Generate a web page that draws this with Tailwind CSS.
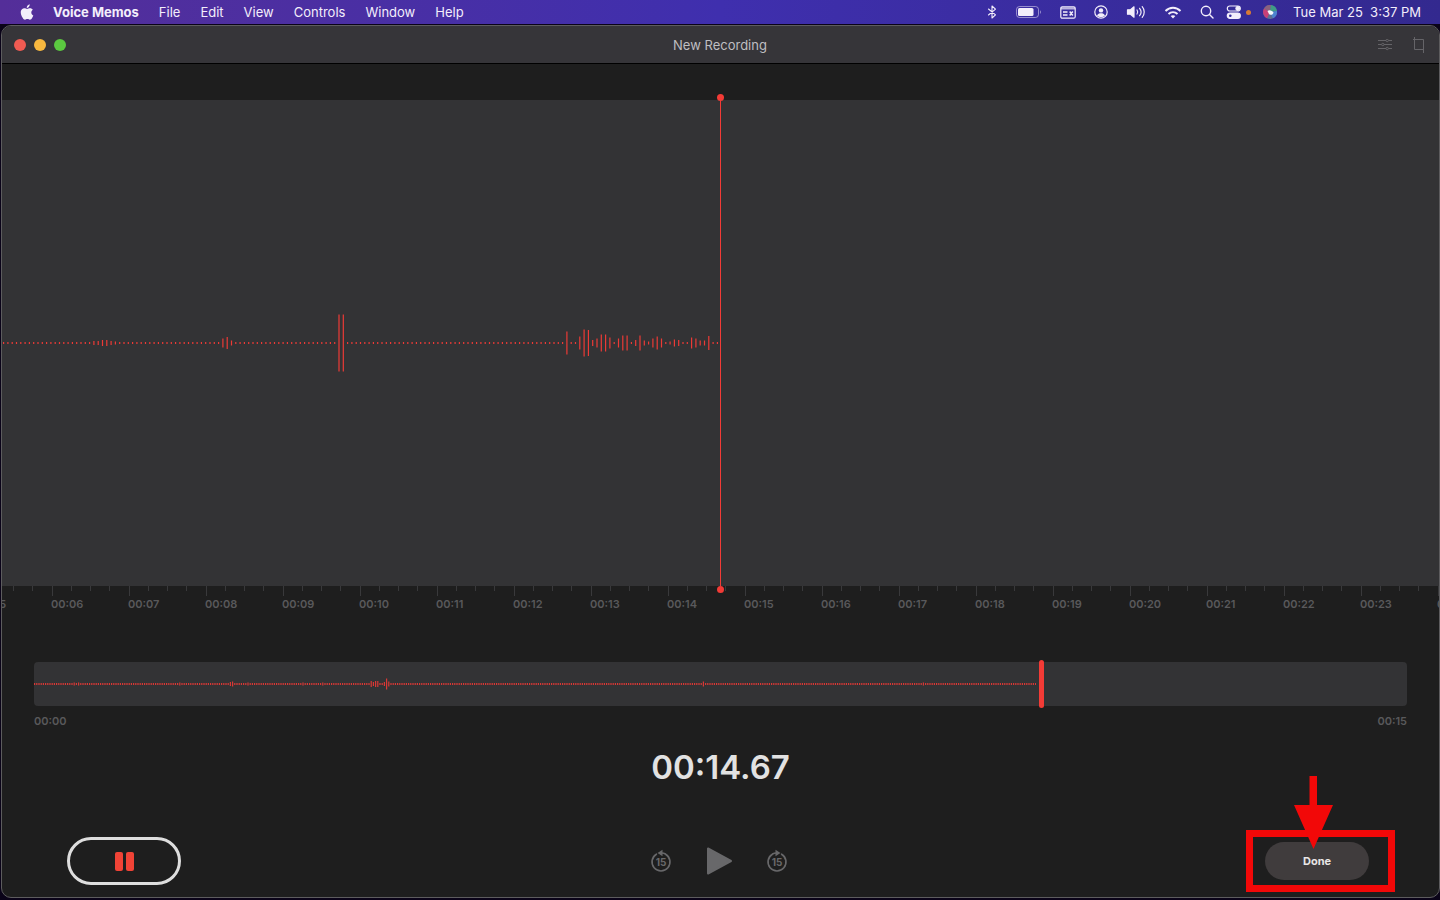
<!DOCTYPE html>
<html lang="en">
<head>
  <meta charset="UTF-8"/>
  <meta name="viewport" content="width=device-width, initial-scale=1.0"/>
  <title>Voice Memos</title>
  <script src="https://cdn.jsdelivr.net/npm/@tailwindcss/browser@4"></script>
</head>
<body class="h-screen flex flex-col overflow-hidden bg-[#0a0318] font-['Inter',sans-serif]">

  <!-- Menu bar -->
  <header class="h-6 shrink-0 flex items-center justify-between pl-5 pr-[19px] bg-linear-to-r from-[#542e99] via-[#3f2fae] via-50% to-[#33298f] text-[13px] leading-6 text-[#f3eefb]">
    <nav class="flex items-center gap-5">
      <button aria-label="Apple menu" class="-mr-px">
        <svg class="block" width="14" height="17" viewBox="0 0 14 17" fill="currentColor">
          <path d="M9.700 0.300C9.800 1.300 9.400 2.200 8.800 2.900C8.300 3.500 7.500 3.900 6.800 3.900C6.700 3 7.100 2.100 7.600 1.500C8.200 0.800 9 0.400 9.700 0.300Z"/>
          <path d="M12.900 5.800C11.900 6.400 11.300 7.400 11.300 8.600C11.300 10 12.100 11.100 13.300 11.600C13 12.500 12.600 13.300 12.100 14C11.500 14.900 10.900 15.700 9.900 15.700C8.900 15.700 8.600 15.100 7.400 15.100C6.300 15.100 5.900 15.700 5 15.700C4 15.700 3.400 14.900 2.800 14C1.400 12 0.500 9.500 0.800 7.500C1.100 5.500 2.500 4.200 4.300 4.200C5.500 4.200 6.300 4.900 7.100 4.900C7.900 4.900 8.800 4.200 10.200 4.200C11.200 4.200 12.200 4.800 12.900 5.800Z"/>
        </svg>
      </button>
      <button class="font-bold">Voice Memos</button>
      <button>File</button>
      <button>Edit</button>
      <button>View</button>
      <button>Controls</button>
      <button>Window</button>
      <button>Help</button>
    </nav>

    <div class="flex items-center gap-3">
      <div class="flex items-center gap-[18px]">
        <!-- Bluetooth -->
        <svg width="12" height="14" viewBox="0 0 12 14" fill="none" stroke="currentColor" stroke-width="1.100" stroke-linejoin="round" stroke-linecap="round">
          <path d="M2.500 4L9.500 9.800L6 13V1L9.500 4.200L2.500 10"/>
        </svg>
        <!-- Battery -->
        <svg width="26" height="12" viewBox="0 0 26 12" fill="none">
          <rect x="0.500" y="0.500" width="22" height="11" rx="3" stroke="currentColor" stroke-opacity="0.500"/>
          <rect x="2" y="2" width="15.500" height="8" rx="1.500" fill="currentColor"/>
          <path d="M24 4.200C25.300 4.700 25.300 7.300 24 7.800Z" fill="currentColor" fill-opacity="0.500"/>
        </svg>
        <!-- Keyboard shortcuts window -->
        <svg width="16" height="13" viewBox="0 0 16 13" fill="none" stroke="currentColor" stroke-width="1.200">
          <rect x="0.800" y="0.800" width="14.400" height="11.400" rx="1.500"/>
          <path d="M1 2.500H15" stroke-width="2" stroke-opacity="0.700"/>
          <path d="M3 6H7.500M3 9H7.500M9.700 5.500L12.800 9.500M12.800 5.500L9.700 9.500" stroke-width="1.500"/>
        </svg>
        <!-- User -->
        <svg width="14" height="14" viewBox="0 0 14 14" fill="none">
          <circle cx="7" cy="7" r="6.200" stroke="currentColor" stroke-width="1.200"/>
          <circle cx="7" cy="5.400" r="2.200" fill="currentColor"/>
          <path d="M3 10.500C3.800 8.900 5.200 8.300 7 8.300C8.800 8.300 10.200 8.900 11 10.500C9 12.600 5 12.600 3 10.500Z" fill="currentColor"/>
        </svg>
        <!-- Volume -->
        <svg width="20" height="14" viewBox="0 0 20 14" fill="none" stroke="currentColor" stroke-width="1.200" stroke-linecap="round">
          <path d="M1.500 4.800H4.500L8 1.800V12.200L4.500 9.200H1.500Z" fill="currentColor" stroke-linejoin="round"/>
          <path d="M11 5C11.900 6.200 11.900 7.800 11 9M13.600 3.300C15.400 5.500 15.400 8.500 13.600 10.700M16.200 1.700C18.900 4.800 18.900 9.200 16.200 12.300"/>
        </svg>
        <!-- Wi-Fi -->
        <svg width="18" height="13" viewBox="0 0 18 13" fill="none" stroke="currentColor" stroke-width="1.900">
          <path d="M1.500 5C5.700 0.700 12.300 0.700 16.500 5M4.500 8C7 5.500 11 5.500 13.500 8"/>
          <path d="M9 12.600L6.600 10.100C8 8.900 10 8.900 11.400 10.100Z" fill="currentColor" stroke="none"/>
        </svg>
        <!-- Search -->
        <svg width="14" height="14" viewBox="0 0 14 14" fill="none" stroke="currentColor" stroke-width="1.400" stroke-linecap="round">
          <circle cx="6" cy="6" r="4.700"/>
          <path d="M9.500 9.500L13 13"/>
        </svg>
      </div>
      <div class="flex items-center gap-1">
        <!-- Control Center -->
        <svg width="16" height="14" viewBox="0 0 16 14" fill="none" stroke="currentColor" stroke-width="1.200">
          <rect x="1.300" y="1" width="13" height="5" rx="2.500"/>
          <circle cx="11.700" cy="3.500" r="1.800" fill="currentColor"/>
          <rect x="1.300" y="8" width="13" height="5.400" rx="2.700" fill="currentColor"/>
          <circle cx="4.300" cy="10.700" r="1.300" fill="#34299a" stroke="none"/>
        </svg>
        <span class="size-[5px] rounded-full bg-[#d97a34]"></span>
      </div>
      <!-- Siri -->
      <svg width="14" height="14" viewBox="0 0 14 14">
        <circle cx="7" cy="7" r="7" fill="#5f6f92"/>
        <path d="M7 7L1 3.500A7 7 0 0 0 4 13.300Z" fill="#c93f78"/>
        <path d="M7 7L1 3.500A7 7 0 0 1 8 0.100Z" fill="#8b617e"/>
        <path d="M7 7L8 0.100A7 7 0 0 1 13.900 6Z" fill="#3f9c86"/>
        <path d="M7 7L13.900 6A7 7 0 0 1 10 13.300Z" fill="#4b83cf"/>
        <path d="M4.500 6C6 4.600 8.500 5 10.500 7.500C10 10 7.500 10.500 6 9Z" fill="#f3f6fb"/>
      </svg>
      <time class="ml-1 whitespace-pre">Tue Mar 25  3:37 PM</time>
    </div>
  </header>

  <!-- App window -->
  <main class="flex-1 min-h-0 mt-px ml-px mb-[2px] flex flex-col overflow-hidden rounded-[10px] border border-[#5d5c5e] bg-[#1e1e1e]">

    <!-- Title bar -->
    <div class="h-[38px] shrink-0 grid grid-cols-3 items-center pl-3 pr-[13px] bg-[#363539] border-b border-black">
      <div class="flex gap-2">
        <button aria-label="Close" class="size-3 rounded-full bg-[#f05b52]"></button>
        <button aria-label="Minimize" class="size-3 rounded-full bg-[#f8b83f]"></button>
        <button aria-label="Zoom" class="size-3 rounded-full bg-[#5bc840]"></button>
      </div>
      <h1 class="text-center text-[13px] leading-5 text-[#bfbec1]">New Recording</h1>
      <div class="flex items-center justify-end gap-5 text-[#656468]">
        <button aria-label="Playback options">
          <svg class="block" width="14" height="12" viewBox="0 0 14 12" fill="none" stroke="currentColor">
            <path d="M0 1.500H8M10.500 1.500H14M0 5.500H3.500M6 5.500H14M0 9.500H8M10.500 9.500H14"/>
            <circle cx="9.200" cy="1.500" r="1.200"/>
            <circle cx="4.800" cy="5.500" r="1.200"/>
            <circle cx="9.200" cy="9.500" r="1.200"/>
          </svg>
        </button>
        <button aria-label="Trim">
          <svg class="block" width="14" height="16" viewBox="0 0 14 16" fill="none" stroke="currentColor">
            <path d="M2.500 0V12.500H12M1 2.500H11.500V16"/>
          </svg>
        </button>
      </div>
    </div>

    <!-- Waveform -->
    <section class="mt-9 flex-1 min-h-0 flex bg-[#333335]">
      <div class="flex-1 min-w-0 flex items-center justify-end overflow-hidden">
        <svg id="waveform" class="shrink-0" width="718" height="60" fill="#ec3a36"></svg>
      </div>
      <div class="relative w-px bg-[#f33b36]">
        <span class="absolute -top-1.5 -left-[3px] size-[7px] rounded-full bg-[#f33b36]"></span>
        <span class="absolute -bottom-[7px] -left-[3px] size-[7px] rounded-full bg-[#f33b36]"></span>
      </div>
      <div class="flex-1"></div>
    </section>

    <!-- Timeline -->
    <div id="ruler" class="h-[76px] shrink-0 -ml-[27px] flex overflow-hidden text-[11px] leading-4 font-semibold text-[#59595b]"></div>

    <!-- Overview -->
    <section class="shrink-0 px-8 text-[11px] leading-4 font-semibold text-[#59595b]">
      <div class="relative h-11 flex items-center rounded bg-[#333335]">
        <svg id="overview" width="1002" height="12" fill="#d93835"></svg>
        <span class="absolute -inset-y-[2px] left-[73.2%] w-[5px] rounded-full bg-[#f33b36]"></span>
      </div>
      <div class="mt-[7px] flex justify-between">
        <span>00:00</span>
        <span>00:15</span>
      </div>
    </section>

    <p class="shrink-0 mt-3.5 text-center text-[33px] leading-12 font-semibold text-[#e2e2e2]">00:14.67</p>

    <!-- Controls -->
    <div class="shrink-0 mt-[46px] mb-3 pl-[65px] pr-[70px] grid grid-cols-[1fr_auto_1fr] items-center">
      <button aria-label="Pause" class="w-[114px] h-12 flex items-center justify-center gap-[3px] rounded-full border-[3px] border-[#dedede]">
        <span class="w-2 h-[19px] rounded-[2px] bg-[#f04336]"></span>
        <span class="w-2 h-[19px] rounded-[2px] bg-[#f04336]"></span>
      </button>

      <div class="ml-px flex items-center gap-[33px] text-[#68686a]">
        <button aria-label="Skip back 15 seconds">
          <svg class="block" width="22" height="24" viewBox="0 0 22 24" fill="none" stroke="currentColor" stroke-width="1.600">
            <path d="M15.600 5.200A9 9 0 1 1 6.400 5.200" stroke-linecap="round"/>
            <path d="M7.500 4L12.500 0.800V7.200Z" fill="currentColor" stroke="none"/>
            <path d="M11.500 4C13 4 14.500 4.400 15.600 5.200"/>
            <text x="11" y="16.500" text-anchor="middle" font-size="10" font-weight="700" fill="currentColor" stroke="none">15</text>
          </svg>
        </button>
        <button aria-label="Play">
          <svg class="block" width="28" height="30" viewBox="0 0 28 30" fill="currentColor" stroke="currentColor" stroke-width="2" stroke-linejoin="round">
            <path d="M3 2.500V27.500L26 15Z"/>
          </svg>
        </button>
        <button aria-label="Skip forward 15 seconds">
          <svg class="block" width="22" height="24" viewBox="0 0 22 24" fill="none" stroke="currentColor" stroke-width="1.600">
            <path d="M15.600 5.200A9 9 0 1 1 6.400 5.200" stroke-linecap="round"/>
            <path d="M14.500 4L9.500 0.800V7.200Z" fill="currentColor" stroke="none"/>
            <path d="M10.500 4C9 4 7.500 4.400 6.400 5.200"/>
            <text x="11" y="16.500" text-anchor="middle" font-size="10" font-weight="700" fill="currentColor" stroke="none">15</text>
          </svg>
        </button>
      </div>

      <div class="relative justify-self-end">
        <button class="block w-[104px] h-[38px] rounded-full bg-[#403c3d] text-[11px] leading-4 font-bold text-[#e8e6e6]">Done</button>
        <!-- Callout box and arrow -->
        <div class="absolute -top-3 -bottom-3 -left-[19px] -right-[26px] border-[7px] border-[#f20808] pointer-events-none"></div>
        <svg class="absolute -top-[66px] left-[29px] pointer-events-none" width="40" height="73" viewBox="0 0 40 73" fill="#f20808">
          <path d="M15.500 0H23V29H39L19.500 73L0 29H15.500Z"/>
        </svg>
      </div>
    </div>
  </main>

  <script>
    // draws count bars, step px apart; peaks maps bar index -> height
    function drawBars(svg, count, step, offset, width, peaks) {
      const middle = svg.getAttribute('height') / 2;
      for (let i = 0; i < count; i++) {
        const h = peaks[i] || 2;
        const bar = document.createElementNS('http://www.w3.org/2000/svg', 'rect');
        bar.setAttribute('x', offset + i * step);
        bar.setAttribute('y', middle - h / 2);
        bar.setAttribute('width', width);
        bar.setAttribute('height', h);
        svg.appendChild(bar);
      }
    }

    drawBars(document.getElementById('waveform'), 167, 4.3, 1, 1.2, {
      21: 4, 22: 4, 23: 6, 24: 6, 25: 4, 26: 3, 51: 9, 52: 12, 53: 5, 78: 57, 79: 57,
      131: 23, 134: 13, 135: 27, 136: 26, 137: 6, 138: 9, 139: 17, 140: 17, 141: 11,
      143: 9, 144: 15, 145: 15, 147: 6, 148: 15, 149: 5, 150: 3, 151: 9, 152: 13, 153: 9,
      155: 3, 156: 7, 157: 6, 160: 11, 161: 9, 162: 5, 163: 5, 164: 14
    });

    drawBars(document.getElementById('overview'), 456, 2.2, 0, 1.2, {
      18: 3, 20: 3, 66: 3, 89: 4, 90: 5, 97: 3, 122: 3, 131: 3,
      153: 6, 154: 4, 155: 6, 156: 6, 159: 4, 160: 11, 161: 5, 304: 5, 404: 3
    });

    // one cell per second: a long tick followed by three short ones
    const ruler = document.getElementById('ruler');
    for (let s = 5; s <= 24; s++) {
      const cell = document.createElement('div');
      cell.className = 'w-[77px] shrink-0';
      cell.innerHTML =
        '<div class="h-[10px] flex items-start">' +
          '<i class="w-[19px] h-[10px] border-l border-[#39393b]"></i>' +
          '<i class="w-[19px] h-[5px] border-l border-[#39393b]"></i>' +
          '<i class="w-[19px] h-[5px] border-l border-[#39393b]"></i>' +
          '<i class="w-5 h-[5px] border-l border-[#39393b]"></i>' +
        '</div>' +
        '<span class="-ml-px">00:' + String(s).padStart(2, '0') + '</span>';
      ruler.appendChild(cell);
    }
  </script>
</body>
</html>
